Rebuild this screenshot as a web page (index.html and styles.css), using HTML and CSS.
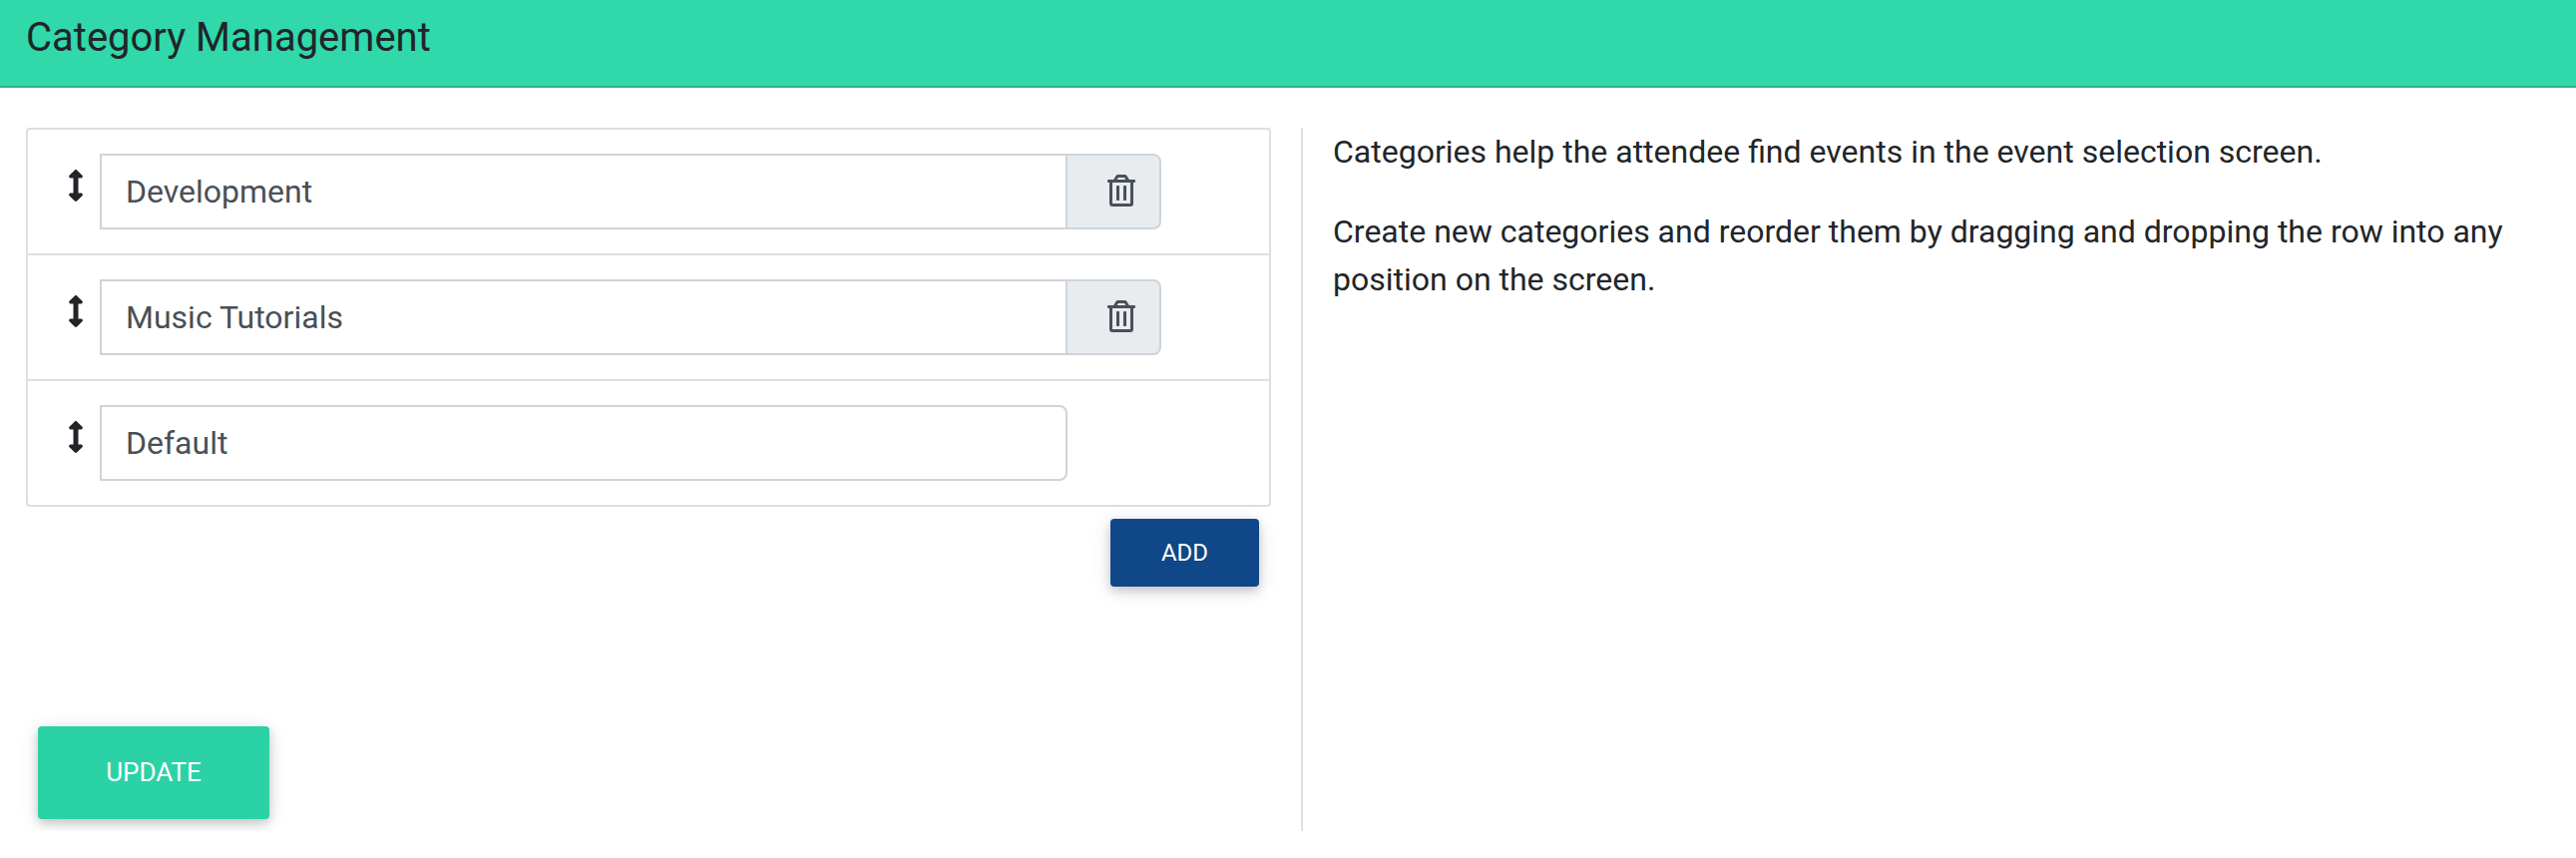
FILE: index.html
```
<!DOCTYPE html>
<html lang="en">
<head>
<meta charset="utf-8">
<title>Category Management</title>
<link rel="stylesheet" href="styles.css">
</head>
<body>
<svg class="sprite" aria-hidden="true">
  <symbol id="arrows" viewBox="0 0 256 512"><path d="M214.059 377.941H168V134.059h46.059c21.382 0 32.09-25.851 16.971-40.971L144.971 7.029c-9.373-9.373-24.568-9.373-33.941 0L24.971 93.088c-15.119 15.119-4.411 40.971 16.971 40.971H88v243.882H41.941c-21.382 0-32.09 25.851-16.971 40.971l86.059 86.059c9.373 9.373 24.568 9.373 33.941 0l86.059-86.059c15.12-15.119 4.412-40.971-16.97-40.971z"/></symbol>
  <symbol id="trash" viewBox="0 0 448 512"><path d="M268 416h24a12 12 0 0 0 12-12V188a12 12 0 0 0-12-12h-24a12 12 0 0 0-12 12v216a12 12 0 0 0 12 12zM432 80h-82.41l-34-56.7A48 48 0 0 0 274.41 0H173.59a48 48 0 0 0-41.16 23.3L98.41 80H16A16 16 0 0 0 0 96v16a16 16 0 0 0 16 16h16v336a48 48 0 0 0 48 48h288a48 48 0 0 0 48-48V128h16a16 16 0 0 0 16-16V96a16 16 0 0 0-16-16zM171.84 50.91A6 6 0 0 1 177 48h94a6 6 0 0 1 5.15 2.91L293.61 80H154.39zM368 464H80V128h288zm-212-48h24a12 12 0 0 0 12-12V188a12 12 0 0 0-12-12h-24a12 12 0 0 0-12 12v216a12 12 0 0 0 12 12z"/></symbol>
</svg>
<header class="header"><h1 class="title">Category Management</h1></header>
<main class="content">
  <section class="editor">
    <ul class="list">
      <li class="row">
        <svg class="handle"><use href="#arrows"/></svg>
        <input class="field" type="text" value="Development">
        <button class="remove" aria-label="Delete"><svg class="trash"><use href="#trash"/></svg></button>
      </li>
      <li class="row">
        <svg class="handle"><use href="#arrows"/></svg>
        <input class="field" type="text" value="Music Tutorials">
        <button class="remove" aria-label="Delete"><svg class="trash"><use href="#trash"/></svg></button>
      </li>
      <li class="row">
        <svg class="handle"><use href="#arrows"/></svg>
        <input class="field field-last" type="text" value="Default">
      </li>
    </ul>
    <button class="btn btn-add">ADD</button>
    <button class="btn btn-update">UPDATE</button>
  </section>
  <aside class="help">
    <p>Categories help the attendee find events in the event selection screen.</p>
    <p>Create new categories and reorder them by dragging and dropping the row into any position on the screen.</p>
  </aside>
</main>
</body>
</html>
```
FILE: styles.css
```
* { box-sizing: border-box; }
body {
  margin: 0;
  background: #fff;
  color: #212529;
  font: 400 32px/48px Roboto, sans-serif;
}
.sprite { display: none; }
.header {
  height: 88px;
  padding: 14px 26px 0;
  background: #30d8aa;
  border-bottom: 2px solid #2eb491;
}
.title { margin: 0; font-size: 40px; line-height: 48px; font-weight: 400; }
.content { display: flex; padding: 40px 26px 0; }
.editor { display: flex; flex-direction: column; width: 1248px; }
.list {
  margin: 0;
  padding: 0;
  list-style: none;
  border: 2px solid #dfdfdf;
  border-radius: 4px;
}
.row { display: flex; height: 126px; padding: 24px 0 0 40px; }
.row + .row { border-top: 2px solid #dfdfdf; }
.row:first-child { height: 124px; }
.handle { width: 16px; height: 32px; margin: 16px 16px 0 0; fill: #212529; }
.field {
  width: 970px;
  height: 76px;
  padding: 0 24px;
  border: 2px solid #ced4da;
  border-radius: 0;
  background: #fff;
  color: #495057;
  font: inherit;
}
.field-last { border-radius: 0 8px 8px 0; }
.remove {
  width: 96px;
  height: 76px;
  margin-left: -2px;
  padding: 19px 0 0 40px;
  border: 2px solid #ced4da;
  border-radius: 0 8px 8px 0;
  background: #e9ecef;
  display: flex;
}
.trash { width: 28px; height: 32px; fill: #495057; }
.btn {
  padding: 0;
  border: 0;
  border-radius: 4px;
  color: #fff;
  font-family: inherit;
  font-weight: 400;
  box-shadow: 0 4px 10px rgba(0, 0, 0, .16), 0 4px 20px rgba(0, 0, 0, .12);
}
.btn-add {
  align-self: flex-end;
  width: 149px;
  height: 68px;
  margin: 12px 12px 0 0;
  background: #0f4788;
  font-size: 24px;
}
.btn-update {
  width: 232px;
  height: 93px;
  margin: 140px 0 0 12px;
  padding-bottom: 2px;
  background: #2bd2a5;
  font-size: 26px;
}
.help {
  flex: 1;
  height: 705px;
  margin-left: 30px;
  padding-left: 30px;
  border-left: 2px solid #dfdfdf;
}
.help p { margin: 0 0 32px; }
```
